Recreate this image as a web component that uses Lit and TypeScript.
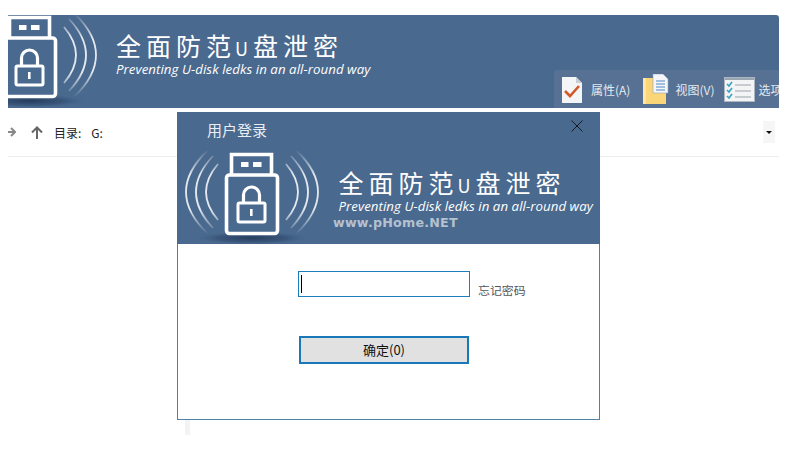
import { LitElement, html, css, svg } from "lit";
import { customElement } from "lit/decorators.js";

const CJK = css`"Noto Sans CJK SC", "Noto Sans", sans-serif`;

@customElement("brand-art")
class BrandArt extends LitElement {
  static styles = css`
    :host { display: flex; width: 423px; height: 132px; flex: none; overflow: hidden; color: #fff; }
    .art { flex: none; width: 160px; height: 132px; display: block; }
    .text { padding: 60px 0 0 1.5px; white-space: nowrap; }
    .title { font: 400 25px/21px ${CJK}; letter-spacing: 5px; }
    .title .u { font-size: 18px; letter-spacing: 5px; margin-left: -1px; }
    .sub { font: italic 400 13.25px/20px "Open Sans", sans-serif; letter-spacing: .06px; }
  `;
  render() {
    const arcs = ["M31 38Q-13 80 31 122", "M36 44Q2 80 36 116", "M41 52Q17 80 41 108"];
    return html`
      <svg class="art" viewBox="0 0 160 132" aria-hidden="true">
        <defs>
          <linearGradient id="fade" gradientUnits="userSpaceOnUse" x1="0" y1="38" x2="0" y2="122">
            <stop offset="0" stop-color="#fff" stop-opacity="0"/>
            <stop offset=".3" stop-color="#fff" stop-opacity=".85"/>
            <stop offset=".7" stop-color="#fff" stop-opacity=".85"/>
            <stop offset="1" stop-color="#fff" stop-opacity="0"/>
          </linearGradient>
          <radialGradient id="shade" cx=".5" cy=".5" r=".5">
            <stop offset="0" stop-color="#24395a" stop-opacity=".95"/>
            <stop offset=".6" stop-color="#2f4a6d" stop-opacity=".6"/>
            <stop offset="1" stop-color="#4a6a8f" stop-opacity="0"/>
          </radialGradient>
        </defs>
        <ellipse cx="75" cy="126" rx="58" ry="7" fill="url(#shade)"/>
        <g fill="none" stroke="url(#fade)" stroke-width="1.8">
          ${arcs.map((d) => svg`<path d=${d}/><path d=${d} transform="matrix(-1 0 0 1 150 0)"/>`)}
        </g>
        <g fill="none" stroke="#fff" stroke-width="3.6">
          <path d="M54.5 62V42.5H94.5V62"/>
          <rect x="49.5" y="63" width="51" height="58.5" rx="3"/>
          <path d="M66.5 91V83a8 8 0 0 1 16 0V91" stroke-width="3.2"/>
          <rect x="61" y="91" width="27" height="19" rx="1.5" stroke-width="3"/>
        </g>
        <g fill="#fff">
          <rect x="64" y="50" width="7.5" height="5"/>
          <rect x="76" y="50" width="8.5" height="5"/>
          <rect x="73" y="97" width="2.6" height="7"/>
        </g>
      </svg>
      <div class="text">
        <div class="title">全面防范<span class="u">U</span>盘泄密</div>
        <div class="sub">Preventing U-disk ledks in an all-round way</div>
      </div>
    `;
  }
}

@customElement("app-root")
class AppRoot extends LitElement {
  static styles = css`
    :host { display: block; position: relative; height: 463px; overflow: hidden; background: #fff; box-sizing: border-box; padding: 15px 22px 0 8px; font-family: ${CJK}; }
    .banner { display: flex; height: 93px; background: #4a698f; overflow: hidden; border-top-right-radius: 3px; }
    .banner brand-art { margin: -40px 0 0 -53.5px; }
    .tools { margin-left: auto; margin-top: 55px; width: 225px; height: 38px; flex: none; background: #567193; display: flex; align-items: center; color: #e3e9f0; font-size: 12px; white-space: nowrap; overflow: hidden; box-sizing: border-box; padding-left: 8px; border-top-left-radius: 3px; }
    .tools svg { flex: none; display: block; }
    .lab1 { margin: 0 13px 0 9px; }
    .lab2 { margin: 0 10px 0 6px; }
    .lab3 { margin-left: 3px; }
    .addr { display: flex; align-items: center; height: 49px; box-sizing: border-box; border-bottom: 1px solid #eeeeee; font-size: 12px; line-height: 18px; color: #222; padding-right: 4px; }
    .addr .nav { flex: none; display: block; }
    .addr .up { margin-left: 15px; }
    .addr .dir { margin: 1px 10px 0 11px; }
    .addr .drv { margin-top: 1px; }
    .addr .drop { margin-left: auto; width: 12px; height: 22px; background: #f6f6f6; display: flex; align-items: center; justify-content: center; }
    .tri { width: 0; height: 0; border: 3px solid transparent; border-top: 3px solid #111; border-bottom: 0; }
    .stub { position: absolute; left: 185px; top: 420px; width: 5px; height: 15px; background: #f3f3f3; }
    .dialog { position: absolute; left: 177px; top: 112px; width: 423px; height: 307.5px; box-sizing: border-box; background: #fff; border: 1px solid #4d82a4; border-top: 0; }
    .head { position: relative; background: #4a698f; height: 132px; margin: 0 -1px; }
    .dtitle { position: absolute; left: 30px; top: 7px; color: #e9eef3; font-size: 15px; line-height: 21px; }
    .close { position: absolute; left: 394px; top: 8px; display: block; }
    .mark { position: absolute; left: 156px; top: 103px; font: 700 12.7px/16px "DejaVu Sans", sans-serif; color: #b4c1cf; white-space: nowrap; letter-spacing: .2px; }
    .body { padding: 27px 0 0 120px; }
    .row { display: flex; align-items: flex-start; }
    .input { width: 172px; height: 26px; box-sizing: border-box; border: 1px solid #1f7cbd; padding: 3px 0 0 2px; background: #fff; }
    .caret { width: 1px; height: 18px; background: #000; }
    .forgot { margin: 11px 0 0 8px; font-size: 11.9px; line-height: 16px; color: #555; }
    .ok { margin: 38px 0 0 1px; width: 170px; height: 28px; box-sizing: border-box; border: 2px solid #1878b8; background: #e1e1e1; font: 13px/24px ${CJK}; color: #111; text-align: center; padding: 0; display: block; }
  `;
  render() {
    return html`
      <div class="banner">
        <brand-art></brand-art>
        <div class="tools">
          <svg width="20" height="27" viewBox="0 0 20 27">
            <path d="M0 1H14L20 7V27H0Z" fill="#f4f5f6"/><path d="M14 1L20 7H14Z" fill="#c9ced6"/>
            <path d="M3 15L8 20L17 10" fill="none" stroke="#d2592a" stroke-width="2.6"/>
          </svg>
          <span class="lab1">属性(A)</span>
          <svg width="26" height="31" viewBox="0 0 26 31">
            <path d="M0 4H14L23 13V30H0Z" fill="#fad678"/><path d="M0 4H3V30H0Z" fill="#fde6a5"/>
            <path d="M10 0H20L25 5V19H10Z" fill="#f4f6f9" stroke="#8fa6c0" stroke-width=".6"/>
            <path d="M13 7H22M13 10H22M13 13H22M13 16H22" stroke="#4f86c0" stroke-width="1.2"/>
          </svg>
          <span class="lab2">视图(V)</span>
          <svg width="31" height="25" viewBox="0 0 31 25">
            <rect x=".5" y=".5" width="30" height="24" fill="#f3f4f5" stroke="#aeb6c0"/>
            <rect x="1" y="1" width="29" height="2" fill="#9aa5b2"/>
            <path d="M3 7L5 9L8 5M3 13L5 15L8 11M3 19L5 21L8 17" fill="none" stroke="#3aa2c4" stroke-width="1.6"/>
            <path d="M11 8H27M11 14H27M11 20H27" stroke="#9ba3ac"/>
          </svg>
          <span class="lab3">选项</span>
        </div>
      </div>
      <div class="addr">
        <svg class="nav" width="8" height="12" viewBox="0 0 8 12"><path d="M0 6H7M3 2L7 6L3 10" fill="none" stroke="#888" stroke-width="2"/></svg>
        <svg class="nav up" width="12" height="13" viewBox="0 0 12 13"><path d="M6 13V1.5M1 6.5L6 1.5L11 6.5" fill="none" stroke="#666" stroke-width="2"/></svg>
        <span class="dir">目录:</span><span class="drv">G:</span>
        <div class="drop"><div class="tri"></div></div>
      </div>
      <div class="stub"></div>
      <div class="dialog">
        <div class="head">
          <brand-art></brand-art>
          <div class="dtitle">用户登录</div>
          <svg class="close" width="12" height="12" viewBox="0 0 12 12"><path d="M.5 .5L11.5 11.5M11.5 .5L.5 11.5" stroke="#111" stroke-width=".9"/></svg>
          <div class="mark">www.pHome.NET</div>
        </div>
        <div class="body">
          <div class="row">
            <div class="input"><div class="caret"></div></div>
            <div class="forgot">忘记密码</div>
          </div>
          <button class="ok">确定(0)</button>
        </div>
      </div>
    `;
  }
}
